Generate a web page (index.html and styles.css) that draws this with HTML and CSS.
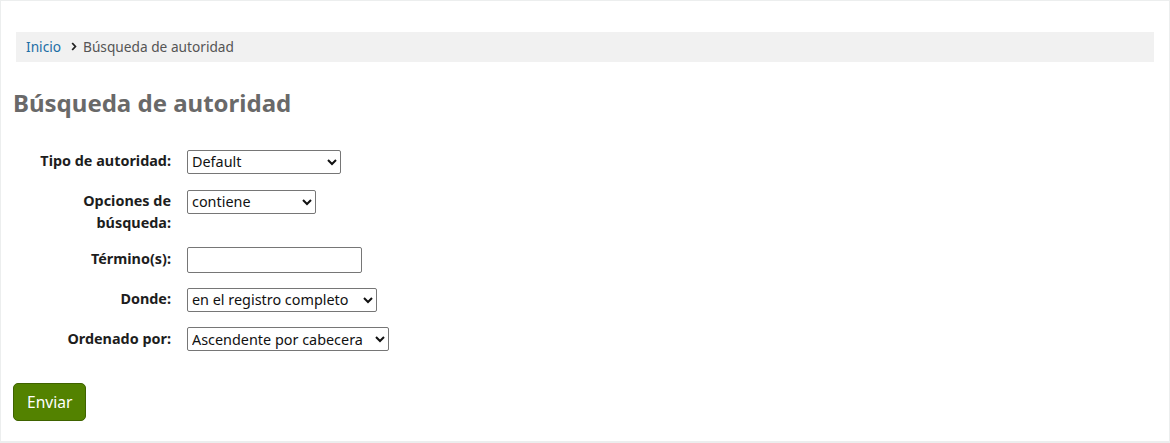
FILE: index.html
```html
<!DOCTYPE html>
<html lang="es">
<head>
<meta charset="utf-8">
<title>Búsqueda de autoridad</title>
<link rel="stylesheet" href="styles.css">
</head>
<body>
<main class="page">
  <nav class="breadcrumb">
    <a href="#" class="crumb-link">Inicio</a>
    <svg class="crumb-sep" width="6" height="9" viewBox="0 0 6 9"><path d="M1.2 1 L4.4 4.5 L1.2 8" fill="none" stroke="#222" stroke-width="1.8"/></svg>
    <span class="crumb-current">Búsqueda de autoridad</span>
  </nav>
  <h1 class="title">Búsqueda de autoridad</h1>
  <form class="search-form">
    <div class="row row-1">
      <label class="row-label" for="tipo">Tipo de autoridad:</label>
      <select id="tipo" class="ctl sel-tipo"><option>Default</option></select>
    </div>
    <div class="row row-2">
      <label class="row-label" for="opc">Opciones de búsqueda:</label>
      <select id="opc" class="ctl sel-opc"><option>contiene</option></select>
    </div>
    <div class="row row-3">
      <label class="row-label" for="term">Término(s):</label>
      <input id="term" class="ctl txt-term" type="text">
    </div>
    <div class="row row-4">
      <label class="row-label" for="donde">Donde:</label>
      <select id="donde" class="ctl sel-donde"><option>en el registro completo</option></select>
    </div>
    <div class="row row-5">
      <label class="row-label" for="orden">Ordenado por:</label>
      <select id="orden" class="ctl sel-orden"><option>Ascendente por cabecera</option></select>
    </div>
    <div class="actions">
      <button type="submit" class="btn-primary">Enviar</button>
    </div>
  </form>
</main>
</body>
</html>
```

FILE: styles.css
```css
html, body {
  margin: 0;
  padding: 0;
}
body {
  background: #eceeee;
  font-family: "Noto Sans", "DejaVu Sans", sans-serif;
  font-size: 14.4px;
  color: #222;
  padding: 1px;
  height: 443px;
  box-sizing: border-box;
}
.page {
  background: #fff;
  height: 440px;
  padding: 31px 12px 0 12px;
  box-sizing: border-box;
}
.breadcrumb {
  margin: 0 3px;
  height: 30px;
  background: #f1f1f1;
  display: flex;
  align-items: center;
  padding: 0 0 1px 10px;
  box-sizing: border-box;
  font-size: 13.7px;
  color: #555;
}
.crumb-link {
  color: #1b6ea5;
  text-decoration: none;
}
.crumb-sep {
  margin: 0 6px 0 10px;
}
.title {
  margin: 26px 0 0 0;
  font-size: 24px;
  line-height: 30px;
  font-weight: bold;
  color: #696969;
}
.search-form {
  margin-top: 32.2px;
}
.row {
  display: flex;
  align-items: flex-start;
  padding-left: 8px;
}
.row-1 { padding-bottom: 16.2px; }
.row-2 { padding-bottom: 12.8px; }
.row-3 { padding-bottom: 15.2px; }
.row-4 { padding-bottom: 15.8px; }
.row-5 { padding-bottom: 16px; }
.row-label {
  width: 150px;
  margin-right: 16px;
  text-align: right;
  font-weight: bold;
  line-height: 22.4px;
  color: #1d1d1d;
}
.ctl {
  font-family: "Noto Sans", "DejaVu Sans", sans-serif;
  font-size: 14.4px;
  color: #111;
  box-sizing: border-box;
  border: 1px solid #767676;
  border-radius: 2px;
  background-color: #fff;
}
select.ctl {
  height: 24px;
  padding: 0;
  margin-top: -0.4px;
}
.sel-tipo { width: 154px; }
.sel-opc { width: 129px; }
.sel-donde { width: 190px; }
.sel-orden { width: 202px; }
.txt-term {
  width: 175px;
  height: 26px;
  padding: 1px 4px;
  margin-top: -0.5px;
}
.actions {
  padding-top: 15.3px;
}
.btn-primary {
  font-family: "Noto Sans", "DejaVu Sans", sans-serif;
  font-size: 15.6px;
  color: #fff;
  background: #538200;
  border: 1px solid #3f6300;
  border-radius: 5px;
  height: 38px;
  padding: 0 13px;
  cursor: pointer;
}
```
